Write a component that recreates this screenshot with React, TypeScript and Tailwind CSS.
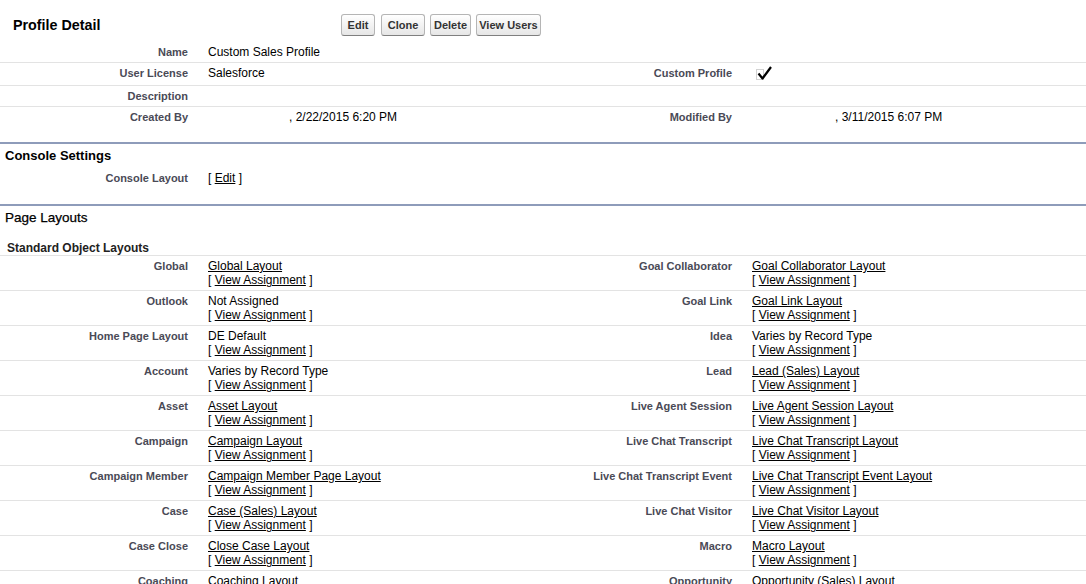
import React from "react";

type Cell = { label: string; value?: React.ReactNode };

const labelCls =
  "pr-[10px] text-right text-[11px] font-bold leading-[14px] text-[#4a4a56]";
const dataCls = "pl-[10px] text-[12px] leading-[14px] text-black";

function Btn({ children, w }: { children: React.ReactNode; w: string }) {
  return (
    <button
      className={`${w} rounded-[3px] border border-[#b5b5b5] border-b-[#7f7f7f] bg-gradient-to-b from-white to-[#e6e6e6] py-[3px] text-center text-[11px] font-bold leading-[14px] text-[#333]`}
    >
      {children}
    </button>
  );
}

function Link({ children }: { children: React.ReactNode }) {
  return <a className="text-black underline">{children}</a>;
}

function Assign({ children }: { children: React.ReactNode }) {
  return (
    <>
      <div>{children}</div>
      <div>
        [ <Link>View Assignment</Link> ]
      </div>
    </>
  );
}

function Check() {
  return (
    <svg width="21" height="16" viewBox="0 0 21 16" className="block">
      <rect x="4.5" y="3.5" width="7" height="10" fill="none" stroke="#a5a5a5" strokeDasharray="1 1" />
      <path d="M6.5 7.5 L10.5 12.5 L19 1" fill="none" stroke="#000" strokeWidth="2.2" strokeLinejoin="round" />
    </svg>
  );
}

function Row({
  left,
  right,
  border = true,
  pad = "pt-[3px] pb-[3px]",
}: {
  left: Cell;
  right?: Cell;
  border?: boolean;
  pad?: string;
}) {
  return (
    <div
      className={`grid grid-cols-[198px_346px_198px_1fr] ${pad} ${border ? "border-b border-[#e3e3e3]" : ""}`}
    >
      <div className={labelCls}>{left.label}</div>
      <div className={dataCls}>{left.value}</div>
      <div className={labelCls}>{right?.label}</div>
      <div className={dataCls}>{right?.value}</div>
    </div>
  );
}

function SectionHead({ title, bold }: { title: string; bold?: boolean }) {
  return (
    <div className="border-t-2 border-[#8e9cba] pl-[5px]">
      <h3
        className={
          bold
            ? "pt-[4px] pb-[4px] text-[13px] font-bold leading-[16px] text-black"
            : "pt-[4px] pb-[3px] text-[13.5px] font-normal leading-[16px] text-black [-webkit-text-stroke:0.25px_black]"
        }
      >
        {title}
      </h3>
    </div>
  );
}

const layouts: [Cell, Cell][] = [
  [
    { label: "Global", value: <Assign><Link>Global Layout</Link></Assign> },
    { label: "Goal Collaborator", value: <Assign><Link>Goal Collaborator Layout</Link></Assign> },
  ],
  [
    { label: "Outlook", value: <Assign>Not Assigned</Assign> },
    { label: "Goal Link", value: <Assign><Link>Goal Link Layout</Link></Assign> },
  ],
  [
    { label: "Home Page Layout", value: <Assign>DE Default</Assign> },
    { label: "Idea", value: <Assign>Varies by Record Type</Assign> },
  ],
  [
    { label: "Account", value: <Assign>Varies by Record Type</Assign> },
    { label: "Lead", value: <Assign><Link>Lead (Sales) Layout</Link></Assign> },
  ],
  [
    { label: "Asset", value: <Assign><Link>Asset Layout</Link></Assign> },
    { label: "Live Agent Session", value: <Assign><Link>Live Agent Session Layout</Link></Assign> },
  ],
  [
    { label: "Campaign", value: <Assign><Link>Campaign Layout</Link></Assign> },
    { label: "Live Chat Transcript", value: <Assign><Link>Live Chat Transcript Layout</Link></Assign> },
  ],
  [
    { label: "Campaign Member", value: <Assign><Link>Campaign Member Page Layout</Link></Assign> },
    { label: "Live Chat Transcript Event", value: <Assign><Link>Live Chat Transcript Event Layout</Link></Assign> },
  ],
  [
    { label: "Case", value: <Assign><Link>Case (Sales) Layout</Link></Assign> },
    { label: "Live Chat Visitor", value: <Assign><Link>Live Chat Visitor Layout</Link></Assign> },
  ],
  [
    { label: "Case Close", value: <Assign><Link>Close Case Layout</Link></Assign> },
    { label: "Macro", value: <Assign><Link>Macro Layout</Link></Assign> },
  ],
  [
    { label: "Coaching", value: <Assign><Link>Coaching Layout</Link></Assign> },
    { label: "Opportunity", value: <Assign><Link>Opportunity (Sales) Layout</Link></Assign> },
  ],
];

export default function App() {
  return (
    <div className="min-h-screen bg-white font-['Liberation_Sans',Arial,sans-serif] text-black">
      {/* profile detail */}
      <div className="flex items-center pt-[14px] pb-[5px]">
        <h2 className="w-[341px] pl-[13px] text-[14.3px] font-bold leading-[22px] text-black">
          Profile Detail
        </h2>
        <div className="flex">
          <Btn w="w-[34px]">Edit</Btn>
          <div className="w-[6px]" />
          <Btn w="w-[44px]">Clone</Btn>
          <div className="w-[5px]" />
          <Btn w="w-[41px]">Delete</Btn>
          <div className="w-[5px]" />
          <Btn w="w-[65px]">View Users</Btn>
        </div>
      </div>
      <div className="pb-[15px]">
        <Row left={{ label: "Name", value: "Custom Sales Profile" }} pad="pt-[4px] pb-[3px]" />
        <Row
          left={{ label: "User License", value: "Salesforce" }}
          right={{ label: "Custom Profile", value: <Check /> }}
        />
        <Row left={{ label: "Description" }} />
        <Row
          border={false}
          left={{
            label: "Created By",
            value: (
              <>
                <span className="inline-block w-[81px]" />, 2/22/2015 6:20 PM
              </>
            ),
          }}
          right={{
            label: "Modified By",
            value: (
              <>
                <span className="inline-block w-[83px]" />, 3/11/2015 6:07 PM
              </>
            ),
          }}
        />
      </div>

      {/* console settings */}
      <SectionHead title="Console Settings" bold />
      <div className="pb-[16px]">
        <Row
          border={false}
          left={{
            label: "Console Layout",
            value: (
              <>
                [ <Link>Edit</Link> ]
              </>
            ),
          }}
        />
      </div>

      {/* page layouts */}
      <SectionHead title="Page Layouts" />
      <div className="border-b border-[#e3e3e3] pt-[12px] pl-[7px] text-[12px] font-bold leading-[14px] text-[#222]">
        Standard Object Layouts
      </div>
      {layouts.map(([l, r]) => (
        <Row key={l.label} left={l} right={r} />
      ))}
    </div>
  );
}
